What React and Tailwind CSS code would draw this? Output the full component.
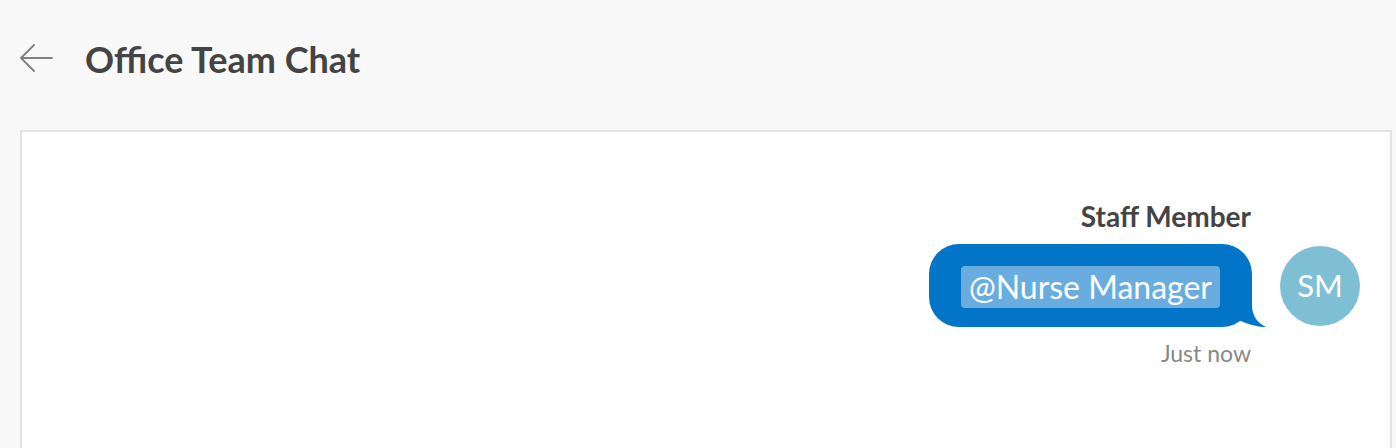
export default function App() {
  return (
    <div className="min-h-screen bg-[#f8f8f8]" style={{ fontFamily: "Lato, 'Liberation Sans', sans-serif" }}>
      {/* Header */}
      <div className="h-[130px] flex items-start pt-[37px] pl-[20px]">
        <svg className="w-[33px] h-[30px] text-[#808080] mt-[6px]" viewBox="0 0 33 30" fill="none" stroke="currentColor" strokeWidth="1.8" strokeLinecap="round">
          <path d="M1 15h31M1 15l13-13M1 15l13 13" />
        </svg>
        <h1 className="ml-[32px] text-[36px] font-bold text-[#444] leading-[44px]">Office Team Chat</h1>
      </div>

      {/* Chat panel */}
      <div className="ml-[20px] mr-[4px] h-[318px] bg-white border-2 border-[#e3e3e3] border-b-0">
        <div className="flex flex-col items-end pt-[67px] pr-[30px]">
          <div className="mr-[109px] text-[28px] font-bold text-[#444] leading-[34px]">Staff Member</div>
          <div className="mt-[11px] flex items-center">
            <div className="relative">
              <div className="bg-[#0275c9] rounded-[30px] px-[32px] pt-[22px] pb-[19px]">
                <span className="block bg-[#69ade0] rounded-[4px] px-[8px] text-[32px] leading-[42px] text-white">@Nurse Manager</span>
              </div>
              {/* bubble tail */}
              <svg className="absolute right-[-18px] bottom-0 w-[48px] h-[34px]" viewBox="0 0 48 34">
                <path d="M14 0 H30 V12 C30 22 35 30 44 34 C37 34.5 26 31 16 27 Z" fill="#0275c9" />
              </svg>
            </div>
            <div className="ml-[28px] w-[80px] h-[80px] rounded-full bg-[#7fbfd4] flex items-center justify-center text-white text-[31px]">SM</div>
          </div>
          <div className="mr-[109px] mt-[12px] text-[23px] text-[#888] leading-[28px]">Just now</div>
        </div>
      </div>
    </div>
  );
}
